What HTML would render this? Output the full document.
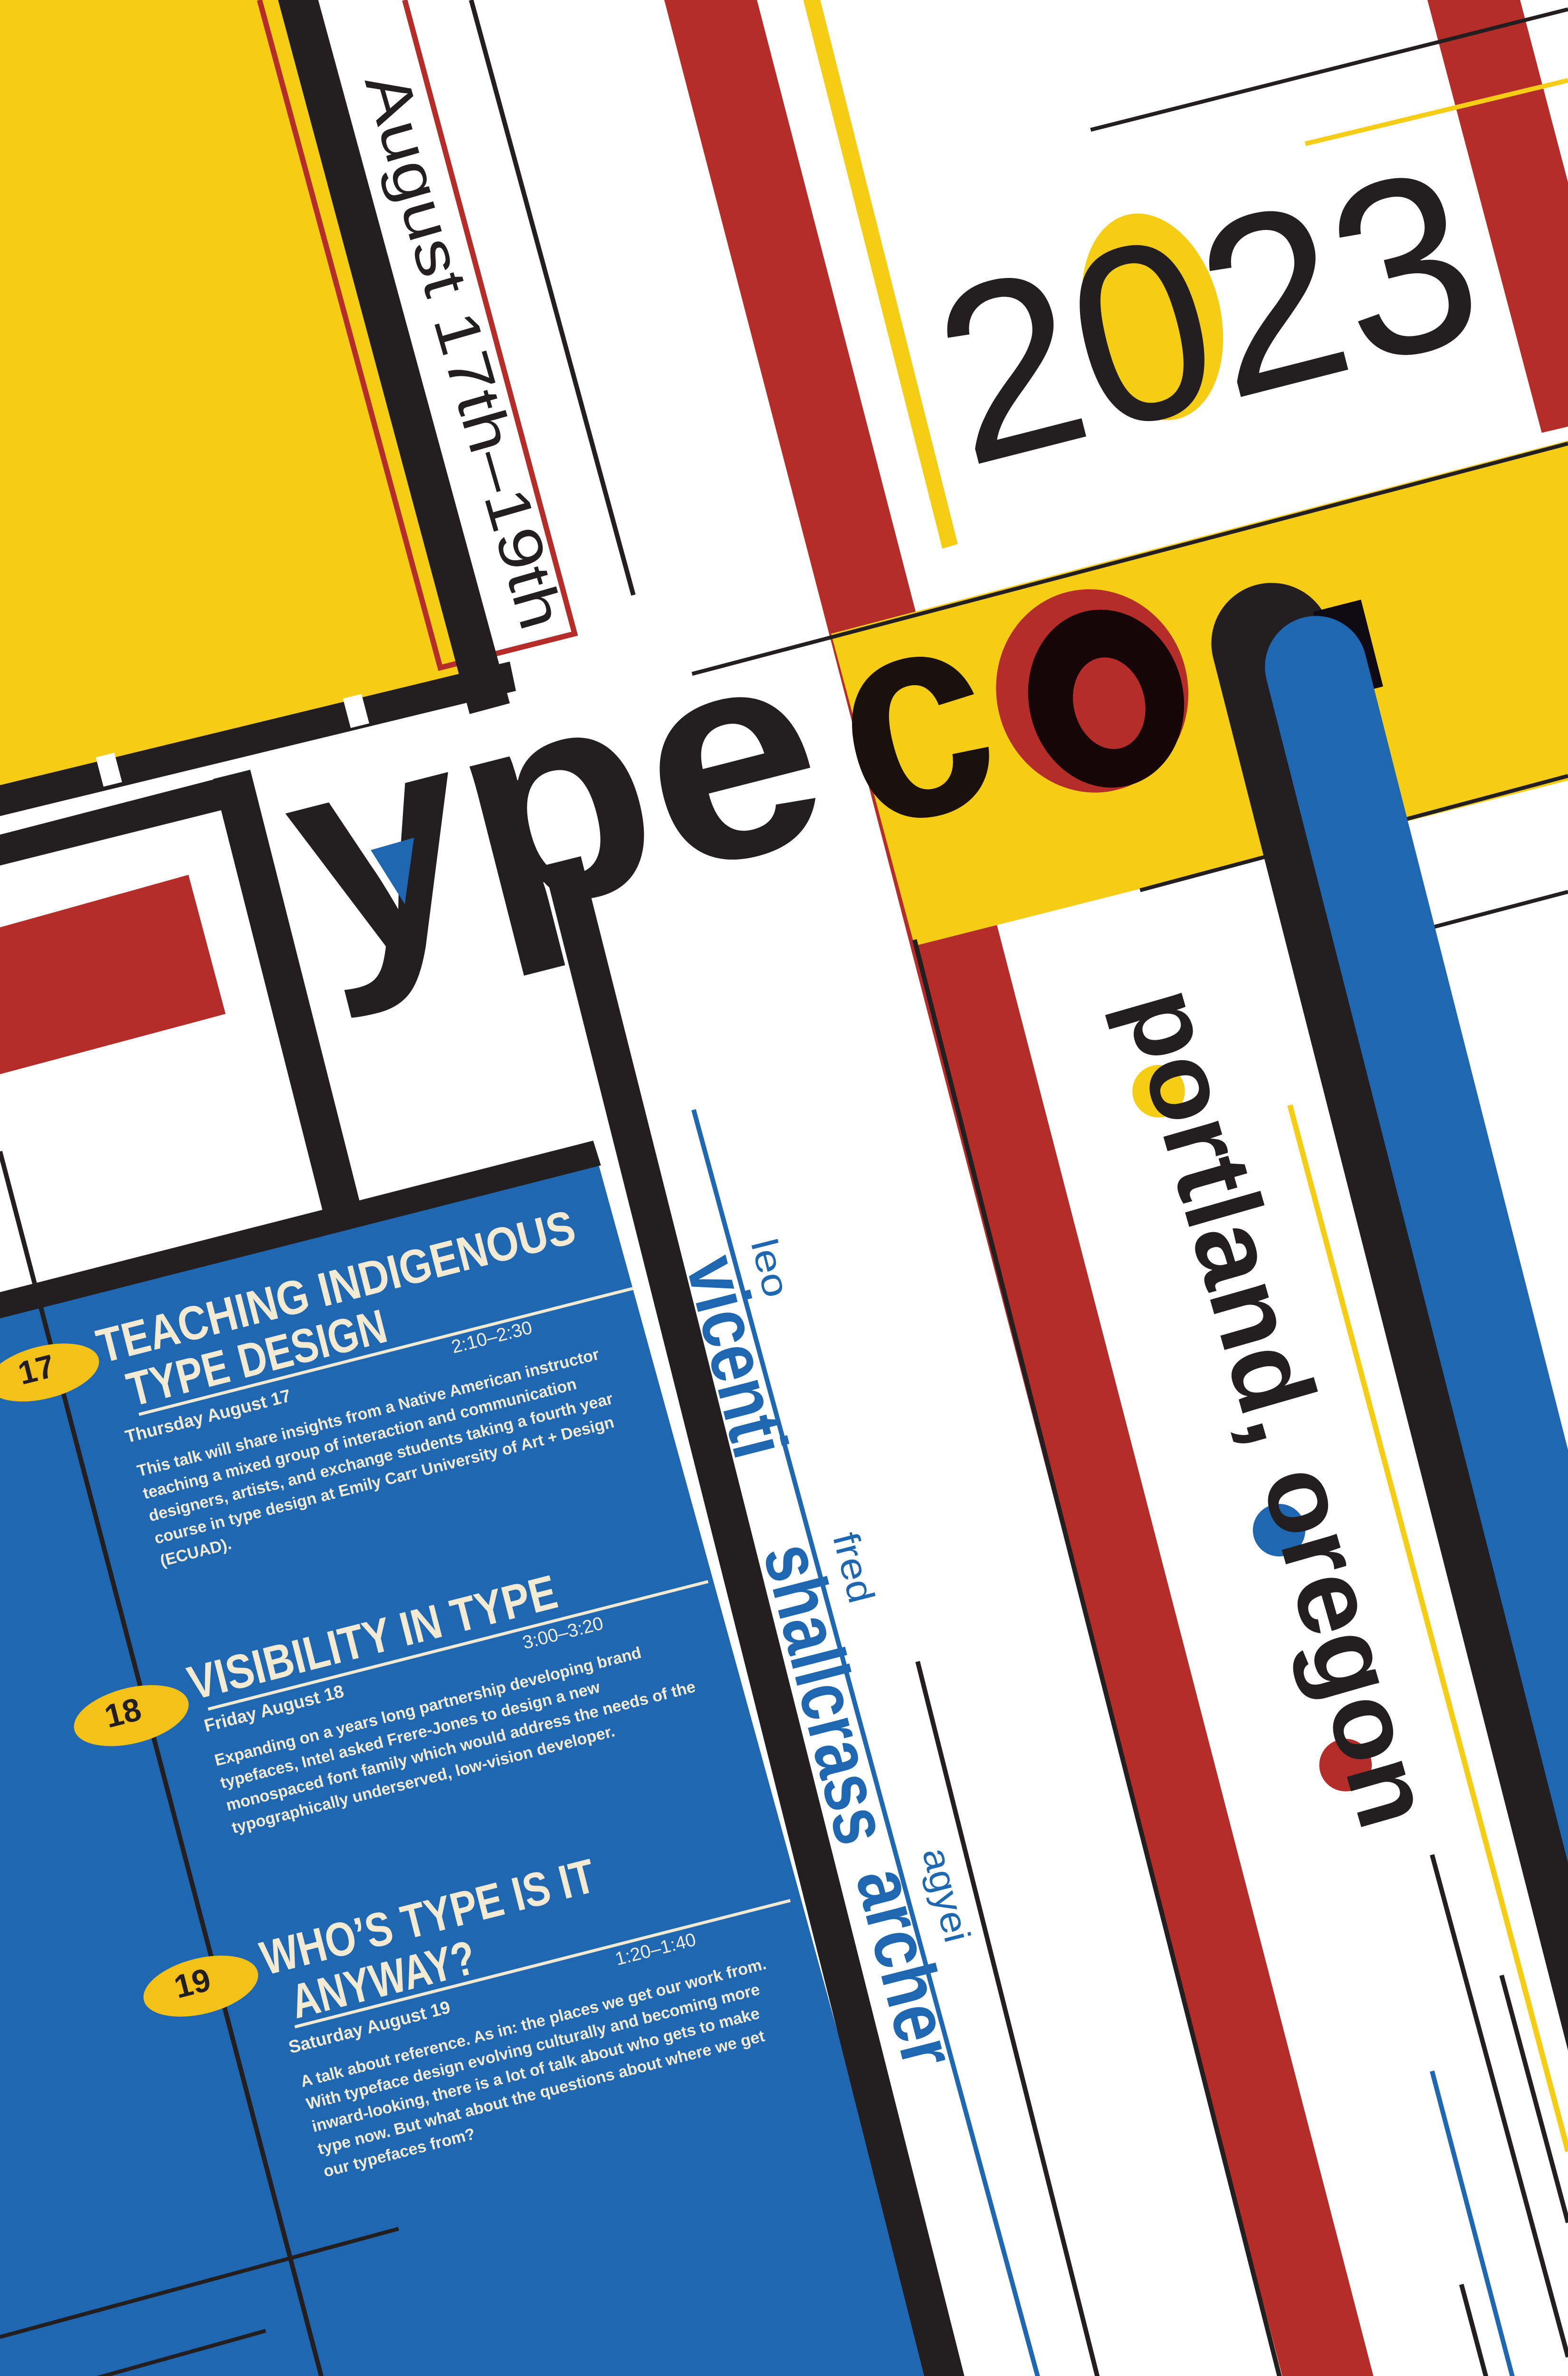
<!DOCTYPE html>
<html><head><meta charset="utf-8"><style>
html,body{margin:0;padding:0;background:#fff;width:3300px;height:5100px;overflow:hidden;}
svg{display:block;}
text{font-family:"Liberation Sans",sans-serif;}
</style></head><body>
<svg xmlns="http://www.w3.org/2000/svg" width="3300" height="5100" viewBox="0 0 1015 1568" preserveAspectRatio="none">
<rect width="1015" height="1568" fill="#fff"/>

<polygon points="0,0 192,0 312,448 0,528" fill="#f5cd14"/>
<path d="M168,0 L285,432 L372,410 L262,0" fill="none" stroke="#b52d28" stroke-width="3.5"/>
<polygon points="180,0 206,0 330,455 304,462" fill="#231f20"/>
<polygon points="0,508 330,428 334,447 0,528" fill="#231f20"/>
<polygon points="62,490 74,487 79,506 67,509" fill="#fff"/>
<polygon points="222,452 234,449 239,468 227,471" fill="#fff"/>
<polygon points="0,540 155,500 160,520 0,560" fill="#231f20"/>
<polygon points="138,504 162,498 234,782 210,788" fill="#231f20"/>
<polygon points="0,600 122,566 146,656 0,695" fill="#b52d28"/>

<text transform="translate(236,52) rotate(74)" font-size="40" fill="#231f20" textLength="372" lengthAdjust="spacingAndGlyphs">August 17th–19th</text>

<line x1="305" y1="0" x2="410" y2="385" stroke="#231f20" stroke-width="3"/>
<polygon points="430,0 490,0 897,1568 838,1568" fill="#b52d28"/>
<polygon points="520,0 531,0 620,352 610,355" fill="#f5cd14"/>
<polygon points="924,0 984,0 1015,118 1015,276 998,280" fill="#b52d28"/>
<line x1="706" y1="84" x2="1015" y2="6" stroke="#231f20" stroke-width="2.5"/>
<line x1="845" y1="93" x2="1015" y2="52" stroke="#f5cd14" stroke-width="3"/>

<ellipse cx="746" cy="205" rx="44" ry="68" fill="#f5cd14" transform="rotate(-14 746 205)"/>
<text transform="translate(626,302) rotate(-14.3)" font-size="162" fill="#231f20" textLength="350" lengthAdjust="spacingAndGlyphs">2023</text>

<polygon points="538,410 1015,285 1015,505 592,612" fill="#f5cd14"/>
<line x1="448" y1="436" x2="1015" y2="287" stroke="#231f20" stroke-width="2.5"/>
<line x1="738" y1="576" x2="1015" y2="502" stroke="#231f20" stroke-width="2.5"/>
<line x1="885" y1="611" x2="1015" y2="577" stroke="#231f20" stroke-width="2.5"/>
<line x1="592" y1="608" x2="836" y2="1568" stroke="#231f20" stroke-width="3"/>

<line x1="835" y1="715" x2="1015" y2="1392" stroke="#f5cd14" stroke-width="3.5"/>

<g transform="translate(835,410) rotate(-14.3)">
  <rect x="-52" y="-36" width="78" height="1500" rx="39" fill="#231f20"/>
  <rect x="18" y="-10" width="32" height="58" fill="#100a14"/>
  <rect x="-22" y="-8" width="66" height="1500" rx="33" fill="#1f67b1"/>
</g>

<polygon points="0,850 386,748 612,1568 0,1568" fill="#1f67b1"/>
<polygon points="0,836 384,738 389,754 0,853" fill="#231f20"/>
<polygon points="352,560 376,554 632,1568 606,1568" fill="#231f20"/>
<line x1="0" y1="745" x2="216" y2="1568" stroke="#231f20" stroke-width="3"/>
<line x1="0" y1="1512" x2="258" y2="1442" stroke="#231f20" stroke-width="2.5"/>
<line x1="0" y1="1556" x2="172" y2="1508" stroke="#231f20" stroke-width="2.5"/>

<text transform="translate(208,624) rotate(-14.3)" font-size="190" font-weight="bold" fill="#231f20" textLength="345" lengthAdjust="spacingAndGlyphs">ype</text>
<polygon points="240,550 268,542 262,585" fill="#1f67b1"/>
<text transform="translate(560,538) rotate(-14.3)" font-size="190" font-weight="bold" fill="#1a100c" textLength="96" lengthAdjust="spacingAndGlyphs">c</text>
<ellipse cx="707" cy="447" rx="62" ry="66" fill="#b52d28" transform="rotate(-14 707 447)"/>
<ellipse cx="716" cy="452" rx="50" ry="58" fill="#160608" transform="rotate(-14 716 452)"/>
<ellipse cx="718" cy="455" rx="23" ry="30" fill="#b52d28" transform="rotate(-14 718 455)"/>

<circle cx="750" cy="706" r="17" fill="#f5cd14"/>
<circle cx="828" cy="990" r="17" fill="#1f67b1"/>
<circle cx="871" cy="1142" r="17" fill="#b52d28"/>
<text transform="translate(728,648) rotate(74)" font-size="70" font-weight="bold" fill="#231f20" textLength="560" lengthAdjust="spacingAndGlyphs">portland, oregon</text>

<line x1="449" y1="718" x2="680" y2="1568" stroke="#1f67b1" stroke-width="3"/>
<g fill="#1f67b1">
<text transform="translate(486,804) rotate(75.7)" font-size="24" textLength="38" lengthAdjust="spacingAndGlyphs">leo</text>
<text transform="translate(444,818) rotate(75.7)" font-size="50" font-weight="bold" textLength="132" lengthAdjust="spacingAndGlyphs">vicenti</text>
<text transform="translate(539,994) rotate(75.7)" font-size="24" textLength="46" lengthAdjust="spacingAndGlyphs">fred</text>
<text transform="translate(494,1004) rotate(75.7)" font-size="50" font-weight="bold" textLength="198" lengthAdjust="spacingAndGlyphs">shallcrass</text>
<text transform="translate(597,1198) rotate(75.7)" font-size="24" textLength="62" lengthAdjust="spacingAndGlyphs">agyei</text>
<text transform="translate(554,1214) rotate(75.7)" font-size="50" font-weight="bold" textLength="130" lengthAdjust="spacingAndGlyphs">archer</text>
</g>

<line x1="594" y1="1075" x2="718" y2="1568" stroke="#231f20" stroke-width="3"/>
<line x1="927" y1="1200" x2="1015" y2="1525" stroke="#231f20" stroke-width="3"/>
<line x1="972" y1="1278" x2="1015" y2="1438" stroke="#231f20" stroke-width="3"/>
<line x1="927" y1="1340" x2="987" y2="1568" stroke="#1f67b1" stroke-width="3"/>
<line x1="946" y1="1478" x2="970" y2="1568" stroke="#231f20" stroke-width="3"/>

<g font-weight="bold" font-size="21" fill="#231f20">
<ellipse cx="28" cy="888" rx="37" ry="17" fill="#f3c118" transform="rotate(-14 28 888)"/>
<text transform="translate(14,896) rotate(-14.3)">17</text>
<ellipse cx="85" cy="1110" rx="38" ry="18" fill="#f3c118" transform="rotate(-14 85 1110)"/>
<text transform="translate(70,1118) rotate(-14.3)">18</text>
<ellipse cx="130" cy="1285" rx="38" ry="18" fill="#f3c118" transform="rotate(-14 130 1285)"/>
<text transform="translate(115,1293) rotate(-14.3)">19</text>
</g>

<g transform="translate(66,882) rotate(-14.3)" fill="#f3ead4">
<text x="0" y="0" font-size="31" font-weight="bold" textLength="318" lengthAdjust="spacingAndGlyphs">TEACHING INDIGENOUS</text>
<text x="12" y="32" font-size="31" font-weight="bold" textLength="172" lengthAdjust="spacingAndGlyphs">TYPE DESIGN</text>
<line x1="15" y1="38" x2="345" y2="38" stroke="#f3ead4" stroke-width="2"/>
<text x="222" y="50" font-size="12">2:10–2:30</text>
<text x="3" y="54" font-size="11.5" font-weight="bold">Thursday August 17</text>
<g font-size="10.5" font-weight="bold">
<text x="5" y="77">This talk will share insights from a Native American instructor</text>
<text x="5" y="92">teaching a mixed group of interaction and communication</text>
<text x="5" y="107">designers, artists, and exchange students taking a fourth year</text>
<text x="5" y="122">course in type design at Emily Carr University of Art + Design</text>
<text x="5" y="137">(ECUAD).</text>
</g>
</g>

<g transform="translate(125,1100) rotate(-14.3)" fill="#f3ead4">
<text x="0" y="0" font-size="31" font-weight="bold" textLength="245" lengthAdjust="spacingAndGlyphs">VISIBILITY IN TYPE</text>
<line x1="8" y1="8" x2="342" y2="8" stroke="#f3ead4" stroke-width="2"/>
<text x="216" y="21" font-size="12">3:00–3:20</text>
<text x="3" y="22" font-size="11.5" font-weight="bold">Friday August 18</text>
<g font-size="10.5" font-weight="bold">
<text x="4" y="45">Expanding on a years long partnership developing brand</text>
<text x="4" y="60">typefaces, Intel asked Frere-Jones to design a new</text>
<text x="4" y="75">monospaced font family which would address the needs of the</text>
<text x="4" y="90">typographically underserved, low-vision developer.</text>
</g>
</g>

<g transform="translate(172,1278) rotate(-14.3)" fill="#f3ead4">
<text x="0" y="0" font-size="31" font-weight="bold" textLength="222" lengthAdjust="spacingAndGlyphs">WHO’S TYPE IS IT</text>
<text x="12" y="32" font-size="31" font-weight="bold" textLength="122" lengthAdjust="spacingAndGlyphs">ANYWAY?</text>
<line x1="10" y1="37" x2="341" y2="37" stroke="#f3ead4" stroke-width="2"/>
<text x="222" y="50" font-size="12">1:20–1:40</text>
<text x="3" y="53" font-size="11.5" font-weight="bold">Saturday August 19</text>
<g font-size="10.5" font-weight="bold">
<text x="5" y="76">A talk about reference. As in: the places we get our work from.</text>
<text x="5" y="91">With typeface design evolving culturally and becoming more</text>
<text x="5" y="106">inward-looking, there is a lot of talk about who gets to make</text>
<text x="5" y="121">type now. But what about the questions about where we get</text>
<text x="5" y="136">our typefaces from?</text>
</g>
</g>
</svg>
</body></html>
